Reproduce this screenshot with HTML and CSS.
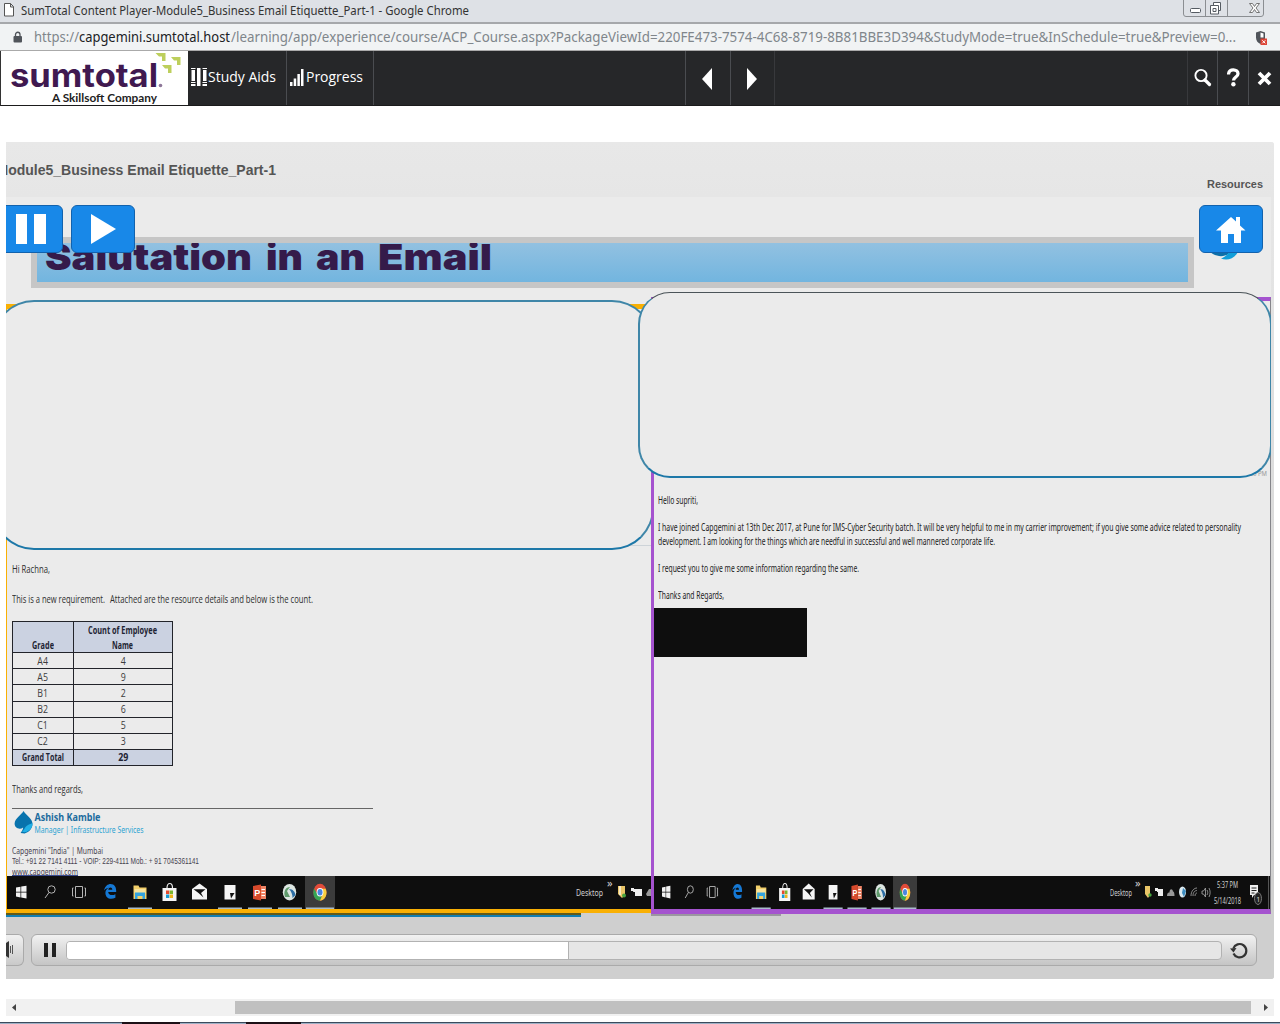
FILE: index.html
```html
<!DOCTYPE html>
<html lang="en">
<head>
<meta charset="utf-8">
<title>SumTotal Content Player</title>
<link rel="stylesheet" href="styles.css">
</head>
<body>
<svg class="defs" width="0" height="0">
  <symbol id="apps" viewBox="0 0 329 33" preserveAspectRatio="none">
    <rect x="299" y="0" width="30" height="33" fill="#3b3b3b"/>
    <path fill="#f2f2f2" d="M10 11.5l4.5-.8v5H10zM15.2 10.6l5.3-.9v6h-5.3zM10 16.4h4.5v5l-4.500-.8zM15.200 16.400h5.300v6l-5.300-.9z"/>
    <g fill="none" stroke="#b5b5b5" stroke-width="1"><circle cx="45.500" cy="13.500" r="3.700"/><path d="M43 16.500l-4 5.500M69.500 10.500h7v11h-7zM67.500 12h-1v8h1M78.500 12h1v8h-1"/></g>
    <path fill="#1578d4" d="M98 14.500c1-4.500 4-6.500 6.500-6.500 4 0 6 3 5.700 8h-8c0 3 4 4 7.200 2.200v3.600c-5 2.500-10 .5-10-5 0-2.500 1.500-4 3.500-5-1.500 0-3.500.8-4.900 2.700zM102.300 13.800h4c0-3-3.500-3-4 0z"/>
    <path fill="#f3d06b" d="M127.500 9.500h5l1 2h7V23h-13z"/><path fill="#f9e49c" d="M128.500 13h11v4h-11z"/><path fill="#35a4de" d="M129 16.500h10V23h-2.500v-3h-5v3H129z"/>
    <path fill="none" stroke="#eee" stroke-width="1.200" d="M161 12c0-6 5.500-6 5.500 0"/><path fill="#f5f5f5" d="M156.500 12h14v13h-14z"/><path fill="#e64a2e" d="M160 14.500h3.300v3.500H160z"/><path fill="#7cb82f" d="M163.700 14.500h3.300v3.500h-3.300z"/><path fill="#189ad6" d="M160 18.500h3.300v3.500H160z"/><path fill="#f0b51c" d="M163.700 18.500h3.300v3.500h-3.300z"/>
    <path fill="#f5f5f5" d="M186 13l7.500-5.500L201 13v10.500h-15z"/><path fill="#111" d="M187.500 13.300h12L195 17l2.500 4.500-5-4.500z"/>
    <path fill="#f5f5f5" d="M218.500 9h11v14.500h-11z"/><path fill="#111" d="M224 17h4.500l-3.500 5.500z"/>
    <path fill="#d74a2c" d="M247 10l8-1.500v16L247 23z"/><path fill="#ef8465" d="M255 10h5v13h-5z"/><text x="248.300" y="20" class="ppt">P</text><path stroke="#fff" d="M255.500 13.500h3.500M255.500 16.500h3.500M255.500 19.500h3.500"/>
    <ellipse cx="283.500" cy="16.200" rx="6.700" ry="8.300" fill="#dde6e2"/><path fill="#5f9a6c" d="M279 21c-2-6 1-10 5-10l-3 4 3 6z"/><path fill="#2c6ea5" d="M283 13c4 0 6 3 6.500 6l-3 3c0-4-1-6-3.500-9z"/>
    <ellipse cx="314" cy="16.200" rx="6.500" ry="8.500" fill="#e14b3a"/><path fill="#35a554" d="M308 12.500c-2 6 .5 12 6 12.200l2.500-6.500-5.500-1z"/><path fill="#f8cf3e" d="M314 24.700c6-.5 8-8 5.500-12h-5l2 6z"/><ellipse cx="314" cy="16.200" rx="3.400" ry="4.200" fill="#fff"/><ellipse cx="314" cy="16.200" rx="2.500" ry="3.300" fill="#4a86e0"/>
    <path fill="#a9bccb" d="M122 31.500h24V33h-24zM212 31.500h24V33h-24zM242 31.500h24V33h-24zM272 31.500h24V33h-24zM300 31.500h28V33h-28z"/>
  </symbol>
</svg>

<header class="titlebar">
  <svg class="doc" width="12" height="16"><path d="M1.500 1.500h6l3 3v9.500h-9zM7.500 1.500v3.500h3" fill="#fff" stroke="#555"/></svg>
  <svg width="449" height="22"><text x="0" y="15" textLength="448" lengthAdjust="spacingAndGlyphs" class="wintitle">SumTotal Content Player-Module5_Business Email Etiquette_Part-1 - Google Chrome</text></svg>
  <svg class="winbtns" width="82" height="18"><path d="M.5 0v14q0 2.500 2.500 2.500h75q2.500 0 2.500-2.500V0M22.500 0v16M44.500 0v16" fill="none" stroke="#8b8e92"/><g fill="#fff" stroke="#555b62"><rect x="7.500" y="8.500" width="10" height="4" rx="1"/><path d="M30.500 2.500h7v8h-7z"/><path d="M27.500 5.500h8v8.500h-8z"/><path d="M30 8.500h3v3h-3z"/></g><path d="M66.500 3.500h3l2 3 2-3h3l-3.500 4.500 3.500 4.500h-3l-2-3-2 3h-3l3.500-4.500z" fill="#fff" stroke="#666" stroke-width=".9"/></svg>
</header>

<div class="urlbar">
  <svg class="lock" width="10" height="13"><rect x=".5" y="5" width="8.500" height="6.500" rx="1" fill="#50545a"/><path d="M2.500 5V3.500a2.200 2.200 0 0 1 4.500 0V5" fill="none" stroke="#50545a" stroke-width="1.300"/></svg>
  <svg class="url" width="1203" height="26" fill="#80868b"><text x="0" y="18" textLength="45" lengthAdjust="spacingAndGlyphs">https://</text><text x="45" y="18" textLength="151" lengthAdjust="spacingAndGlyphs" fill="#202124">capgemini.sumtotal.host</text><text x="197" y="18" textLength="1005" lengthAdjust="spacingAndGlyphs">/learning/app/experience/course/ACP_Course.aspx?PackageViewId=220FE473-7574-4C68-8719-8B81BBE3D394&amp;StudyMode=true&amp;InSchedule=true&amp;Preview=0...</text></svg>
  <svg class="shield" width="14" height="16"><path d="M5.500 1L1 2.500v5c0 3.500 2 5.500 4.500 6.500l4.500-4V2.500z" fill="#50545a"/><path d="M5.500 2.500l3 1v4h-3z" fill="#fff"/><path d="M5.500 8.500h6.500V15H5.500z" fill="#dd4537"/><path d="M7.300 10.300l3 3m0-3l-3 3" stroke="#fff"/></svg>
</div>

<nav class="toolbar">
  <div class="logo">
    <svg width="187" height="54">
      <text x="9" y="36" textLength="148" lengthAdjust="spacingAndGlyphs" class="brand">sumtotal</text>
      <circle cx="159.500" cy="34.500" r="1.800" fill="#8d7798"/>
      <text x="51" y="51" textLength="105" lengthAdjust="spacingAndGlyphs" class="tagline">A Skillsoft Company</text>
      <path fill="#bdcf5c" d="M154.500 2h10v8h-3.500V5.500H158zM170 6h9.500v8H176V9.500h-3zM161 14h9.500v8H167v-4.500h-3z"/>
    </svg>
  </div>
  <div class="item aids">
    <svg width="17" height="20"><path fill="#fff" d="M.5 3H4v11H.5zM0 1h4.500v1H0zM0 15h4.500v1H0zM0 17h4.500v2H0zM6 1h3.500v18H6zM12 3h3.500v11H12zM11.500 1H16v1h-4.500zM11.500 15H16v1h-4.500zM11.500 17H16v2h-4.500z"/></svg>
    <svg width="69" height="20"><text x="0" y="15" textLength="68" lengthAdjust="spacingAndGlyphs">Study Aids</text></svg>
  </div>
  <div class="item progress">
    <svg width="16" height="20"><path fill="#fff" d="M0 15h2.500v4H0zM3.700 11.500h2.500V19H3.700zM7.400 7h2.500v12H7.400zM11 2h2.500v17H11z"/></svg>
    <svg width="58" height="20"><text x="0" y="15" textLength="57" lengthAdjust="spacingAndGlyphs">Progress</text></svg>
  </div>
  <div class="item prev"><svg width="10" height="22"><path fill="#fff" d="M10 0v22L0 11z"/></svg></div>
  <div class="item next"><svg width="10" height="22"><path fill="#fff" d="M0 0v22l10-11z"/></svg></div>
  <div class="item search"><svg width="18" height="20"><circle cx="7" cy="7.500" r="5.600" fill="none" stroke="#fff" stroke-width="1.900"/><path d="M11 12l4.500 4.500" stroke="#fff" stroke-width="3.200" stroke-linecap="round"/></svg></div>
  <div class="item help"><svg width="14" height="20"><path d="M1.500 6.500c.3-6.800 9.500-5.500 9.500-.8 0 3.300-4.500 3.300-4.500 6.800" fill="none" stroke="#fff" stroke-width="3.300"/><circle cx="6.400" cy="16.300" r="2.200" fill="#fff"/></svg></div>
  <div class="item close"><svg width="15" height="15"><path d="M2 2l11 11M13 2L2 13" stroke="#fff" stroke-width="3.800"/></svg></div>
</nav>

<main class="stage">
  <div class="stagehead">
    <svg width="275" height="55"><text x="-9.500" y="33" textLength="279.500" lengthAdjust="spacingAndGlyphs" class="course">Module5_Business Email Etiquette_Part-1</text></svg>
    <svg class="res" width="57" height="55"><text x="0" y="46" textLength="56" lengthAdjust="spacingAndGlyphs" class="resources">Resources</text></svg>
  </div>

  <section class="slide">
    <div class="banner"><svg width="460" height="39" class="headline"><text x="8" y="27" textLength="207" lengthAdjust="spacingAndGlyphs">Salutation</text><text x="229" y="27" textLength="37" lengthAdjust="spacingAndGlyphs">in</text><text x="279" y="27" textLength="49" lengthAdjust="spacingAndGlyphs">an</text><text x="341" y="27" textLength="114" lengthAdjust="spacingAndGlyphs">Email</text></svg></div>

    <div class="panes">
      <article class="mail left">
        <div class="body">
          <svg class="ln" width="39" height="16"><text x="0" y="12" textLength="38" lengthAdjust="spacingAndGlyphs">Hi Rachna,</text></svg>
          <svg class="ln" width="302" height="16"><text x="0" y="12" textLength="93" lengthAdjust="spacingAndGlyphs">This is a new requirement.</text><text x="98" y="12" textLength="203" lengthAdjust="spacingAndGlyphs">Attached are the resource details and below is the count.</text></svg>
          <table>
            <tr class="band head"><td><svg width="22" height="15"><text x="0" y="12" textLength="22" lengthAdjust="spacingAndGlyphs">Grade</text></svg></td><td><svg width="70" height="30"><text x="0" y="12" textLength="69" lengthAdjust="spacingAndGlyphs">Count of Employee</text><text x="24" y="27" textLength="21" lengthAdjust="spacingAndGlyphs">Name</text></svg></td></tr>
            <tr><td><span>A4</span></td><td><span>4</span></td></tr>
            <tr><td><span>A5</span></td><td><span>9</span></td></tr>
            <tr><td><span>B1</span></td><td><span>2</span></td></tr>
            <tr><td><span>B2</span></td><td><span>6</span></td></tr>
            <tr><td><span>C1</span></td><td><span>5</span></td></tr>
            <tr><td><span>C2</span></td><td><span>3</span></td></tr>
            <tr class="band"><td><svg width="43" height="14"><text x="0" y="11" textLength="42" lengthAdjust="spacingAndGlyphs">Grand Total</text></svg></td><td><span>29</span></td></tr>
          </table>
          <svg class="ln thanks" width="72" height="16"><text x="0" y="12" textLength="71" lengthAdjust="spacingAndGlyphs">Thanks and regards,</text></svg>
          <div class="rule"></div>
          <svg class="sig" width="200" height="67">
            <path fill="#0873ad" d="M11.500 2C9.500 6 3 9 2.600 14.500c0 5 5.500 6.500 8.500 4-.2 2-1 3.500-2.500 5.500l4 .5C17.500 23 20.500 19 20.500 15c0-5.500-6-8-9-13z"/><path fill="#22b0e6" d="M20.500 14c-2 1-4 1.500-6 3-2 1.500-2 4-4.500 5.500 1.500 1 4 1 6-.5 3-1.500 4.500-4 4.500-8z"/>
            <text x="22.500" y="12" textLength="66" lengthAdjust="spacingAndGlyphs" class="name">Ashish Kamble</text>
            <text x="22.500" y="23.500" textLength="109" lengthAdjust="spacingAndGlyphs" class="role">Manager | Infrastructure Services</text>
            <g class="addr"><text x="0" y="44.500" textLength="91" lengthAdjust="spacingAndGlyphs">Capgemini "India" | Mumbai</text><text x="0" y="55" textLength="187" lengthAdjust="spacingAndGlyphs" class="tel">Tel.: +91 22 7141 4111 - VOIP: 229-4111 Mob.: + 91 7045361141</text><text x="0" y="66" textLength="66" lengthAdjust="spacingAndGlyphs">www.capgemini.com</text></g>
            <path d="M0 66.500h66" stroke="#3a4a90"/>
          </svg>
        </div>
        <div class="taskbar">
          <svg width="329" height="33"><use href="#apps" x="-1" width="329" height="33"/></svg>
          <svg width="78" height="33"><text x="3" y="20" textLength="27" lengthAdjust="spacingAndGlyphs">Desktop</text><text x="34" y="11" class="chev">»</text><path fill="#e9c567" d="M45 10h7v9l-3 3-4-4z"/><path fill="#fff" opacity=".6" d="M46 10h2v9h-2z"/><circle cx="51" cy="19.500" r="2" fill="#46a33e"/><path fill="#eee" d="M61 13h8v7h-7v-4h-2zM58 12h3v3h-3z"/><path fill="#999" d="M73 18l3-5h2v7h-4z"/></svg>
        </div>
      </article>

      <article class="mail right">
        <div class="body">
          <svg class="para" width="590" height="120">
            <text x="0" y="10" textLength="40" lengthAdjust="spacingAndGlyphs">Hello supriti,</text>
            <text x="0" y="37" textLength="583" lengthAdjust="spacingAndGlyphs">I have joined Capgemini at 13th Dec 2017, at Pune for IMS-Cyber Security batch. It will be very helpful to me in my carrier improvement; if you give some advice related to personality</text>
            <text x="0" y="50.500" textLength="337" lengthAdjust="spacingAndGlyphs">development. I am looking for the things which are needful in successful and well mannered corporate life.</text>
            <text x="0" y="77.500" textLength="201" lengthAdjust="spacingAndGlyphs">I request you to give me some information regarding the same.</text>
            <text x="0" y="104.500" textLength="66" lengthAdjust="spacingAndGlyphs">Thanks and Regards,</text>
          </svg>
          <div class="redacted"></div>
        </div>
        <div class="taskbar">
          <svg width="263" height="33"><use href="#apps" width="263" height="33"/></svg>
          <svg width="162" height="33">
            <text x="2" y="20" textLength="22" lengthAdjust="spacingAndGlyphs">Desktop</text><text x="27" y="11" class="chev">»</text>
            <path fill="#e9c567" d="M37 10h5v9l-2 3-3-4z"/><circle cx="42" cy="19" r="1.700" fill="#46a33e"/>
            <path fill="#eee" d="M49 13h6v7h-5v-4h-1zM47 12h3v3h-3z"/><path fill="#999" d="M59 20c0-3 1.500-4 2.500-3.500 0-4 3-4 3.500-1 1 0 1.500 2 1.500 4.500z"/>
            <ellipse cx="74.500" cy="16" rx="3.500" ry="5.500" fill="#dceaf0"/><path fill="#3c8cc0" d="M75 12l3 3-2 6-2-4z"/>
            <path fill="none" stroke="#aaa" stroke-width=".8" d="M83 20c0-5 3-8 6-8M85 20c0-4 2-5.500 4-5.500M87 20c0-2 1-3 2-3M94 15h1.500l2-3v9l-2-3H94zM99 14c1 2 1 3 0 5M101 12c1.500 3 1.500 6 0 9"/>
            <text x="109" y="12" textLength="21" lengthAdjust="spacingAndGlyphs">5:37 PM</text><text x="106" y="28" textLength="27" lengthAdjust="spacingAndGlyphs">5/14/2018</text>
            <path fill="#eee" d="M142 9h8v10h-4l-2 3v-3h-2z"/><path stroke="#222" d="M143.500 12h5M143.500 14.500h5M143.500 17h3"/><ellipse cx="150" cy="22.500" rx="3.500" ry="6" fill="#222" stroke="#777"/><text x="148.200" y="25.500" class="one">1</text><path d="M160.500 0v33" stroke="#555"/>
          </svg>
        </div>
      </article>
    </div>

    <div class="footline"></div>
    <div class="footshade"></div>
    <div class="hairline"></div>
    <svg class="stamp" width="24" height="10"><text x="1" y="8" textLength="19" lengthAdjust="spacingAndGlyphs">:33 PM</text></svg>
    <div class="callout one-left"></div>
    <div class="callout two-right"></div>

    <svg class="spade" width="32" height="10"><path fill="#0c6fa9" d="M0 0h20c-3 5-13 6-20 0z"/><path fill="#119ed9" d="M28 0C24 7 17 9 11 6.500c3-1 6-3 8-6.500z"/></svg>
    <button class="ctl c-pause"><svg width="30" height="30"><path fill="#fff" d="M0 0h11v30H0zM18 0h12v30H18z"/></svg></button>
    <button class="ctl c-play"><svg width="26" height="30"><path fill="#fff" d="M0 0v30l25-15z"/></svg></button>
    <button class="ctl c-home"><svg width="30" height="27"><path fill="#fff" d="M0 14.500L15 1l5 4.500V1h4v8.500l5.500 5H25V27h-7v-9h-6v9H5V14.500z"/></svg></button>
  </section>

  <footer class="player">
    <div class="volume"><svg width="17" height="30"><path fill="#333" d="M0 8l3-2v17l-3-2z"/><path stroke="#555" stroke-width="1" d="M4.500 11v7M6.500 10v9"/></svg></div>
    <div class="seekbox">
      <svg width="12" height="14"><path fill="#222" d="M0 0h4v14H0zM8 0h4v14H8z"/></svg>
      <div class="track"><div class="played"></div></div>
      <svg class="replay" width="20" height="20"><path d="M4.500 13.500A6.700 6.700 0 1 0 4.300 8.500" fill="none" stroke="#333" stroke-width="2.200"/><path fill="#333" d="M1 8.500l6.500-.5-3 4.500z"/></svg>
    </div>
  </footer>
</main>

<div class="scroll">
  <svg width="17" height="17"><path fill="#444" d="M10 5v7L6 8.500z"/></svg>
  <div class="thumb"></div>
  <svg class="fwd" width="17" height="17"><path fill="#444" d="M7 5v7l4-3.500z"/></svg>
</div>
<div class="desktop"><i></i><b></b><i></i><b></b><i></i></div>
</body>
</html>
```
FILE: styles.css
```css
* { box-sizing: border-box; }
body { margin: 0; width: 1280px; height: 1024px; overflow: hidden; background: #fff; display: flex; flex-direction: column; font-family: "Noto Sans", "Open Sans", sans-serif; }
body > * { flex: none; }
svg { display: block; flex: none; }
svg.defs { position: absolute; }

.titlebar { height: 24px; background: #dee1e6; border-bottom: 2px solid #a6a8ab; display: flex; padding-left: 3px; }
.doc { margin: 2px 6px 0 0; }
.wintitle { font-size: 12px; fill: #333; }
.winbtns { margin: 0 15px 0 auto; }

.urlbar { height: 27px; background: #f1f3f4; border-bottom: 1px solid #aaa; display: flex; padding-left: 13px; }
.lock { margin: 7px 11px 0 0; }
.url { font-size: 13.5px; }
.shield { margin: 6px 11px 0 auto; }

.toolbar { height: 55px; background: #262729; display: flex; border-left: 1px solid #333; border-bottom: 1px solid #1b1b1c; }
.logo { width: 187px; background: #fff; }
.brand { font: 700 32px Inter, sans-serif; fill: #401950; }
.tagline { font: 700 10.5px Lato, sans-serif; fill: #222; }
.item { display: flex; border-right: 1px solid #4a4c50; font-family: "Open Sans", sans-serif; font-size: 14px; fill: #fff; }
.aids { width: 99px; padding: 16px 0 0 3px; }
.progress { width: 87px; padding: 16px 0 0 3px; }
.prev { margin-left: 311px; width: 46px; border-left: 1px solid #4a4c50; padding: 17px 0 0 16px; }
.next { width: 44px; padding: 17px 0 0 16px; border-right-color: #38393c; }
.search { margin-left: 412px; width: 31px; border-left: 1px solid #38393c; padding: 17px 0 0 6px; }
.help { width: 31px; padding: 17px 0 0 9px; }
.close { border: 0; padding: 20px 0 0 8px; }

.stage { margin: 36px 6px 0; height: 837px; width: 1268px; overflow: hidden; background: linear-gradient(#e8e8e8, #e6e6e6 8%, #cfcfcf 88%); border-radius: 0 3px 3px 0; display: flex; flex-direction: column; }
.stagehead { height: 55px; background: linear-gradient(#e8e8e8, #e6e6e6); display: flex; justify-content: space-between; padding-right: 10px; }
.course { font: 700 14px "Liberation Sans", sans-serif; fill: #555; }
.resources { font: 700 11px "Liberation Sans", sans-serif; fill: #555; }

.slide { position: relative; width: 1265px; height: 720px; background: linear-gradient(#ebebeb 713px, #cfcfcf 713px); padding: 40px 0 0; overflow: hidden; }
.banner { margin-left: 25px; width: 1163px; height: 51px; border: 6px solid #c6c6c6; background: linear-gradient(#92c1e1, #72b5df); }
.headline { font: 900 36px Inter, sans-serif; fill: #351b4a; }

.panes { display: grid; grid-template-columns: 645px 620px; align-items: start; height: 626px; }
.mail { display: flex; flex-direction: column; background: #ebebeb; }
.body { flex: 1; overflow: hidden; }
.left { margin-top: 16px; height: 609px; border: solid #f9b004; border-width: 5px 0 4px 1px; }
.right { margin-top: 9px; height: 617px; border: solid #a553cf; border-width: 4px 0 5px 3px; border-right: 1px solid #85858a; }
.left .body { padding: 252px 0 0 5px; font-family: "Open Sans", sans-serif; }
.ln { font-size: 11px; fill: #2e2e2e; margin-bottom: 14px; }
.left table { width: 161px; height: 145px; border-collapse: collapse; table-layout: fixed; font-size: 11px; color: #3c3c3c; }
.left td { border: 1px solid #22242a; padding: 0; height: 16px; text-align: center; line-height: 14px; }
.left td:first-child { width: 61px; }
.left td svg { margin: 0 auto; }
.left td span { display: inline-block; transform: scaleX(.8); vertical-align: top; }
.band { background: #cbd2e1; font-weight: 700; color: #1e2433; fill: #1e2433; }
.left .head td { height: 31px; vertical-align: bottom; }
.thanks { margin: 15px 0 11px; }
.rule { width: 361px; height: 1px; background: #666; }
.sig { font-family: "Noto Sans", sans-serif; }
.name { font-size: 11px; font-weight: 700; fill: #1d6c9e; }
.role { font-size: 9px; fill: #2ea3d2; }
.addr { font-size: 9px; fill: #484350; }
.tel { font-family: "Liberation Sans", sans-serif; }
.para { margin: 193px 0 0 4px; font-size: 10.8px; fill: #222; }
.redacted { width: 153px; height: 49px; margin-top: -6px; background: #0e0e0e; }
.taskbar { flex: none; height: 33px; background: #0e0e0e; display: flex; justify-content: space-between; font-size: 9.5px; fill: #d0d0d0; }
.chev { font-size: 11px; }
.ppt { font: 700 9px "Liberation Sans", sans-serif; fill: #fff; }
.one { font-size: 7px; }

/* objects floating on the slide canvas */
.footline, .footshade, .hairline, .stamp, .callout, .spade, .ctl { position: absolute; }
.footline { left: 0; top: 716px; width: 575px; height: 4px; background: linear-gradient(#625a19 50%, #117fb5 50%); }
.footshade { left: 645px; top: 717px; width: 130px; height: 2px; background: #9b97a0; }
.hairline { left: 600px; top: 348px; width: 45px; height: 1px; background: #cdd3d8; }
.stamp { left: 1241px; top: 271px; font-size: 7px; fill: #999; }
.callout { background: #ebebeb; border: 2px solid #3f86a8; border-bottom-color: #1d78a8; }
.one-left { left: -14px; top: 103px; width: 662px; height: 250px; border-radius: 42px; clip-path: inset(0 3px 0 0); }
.two-right { left: 632px; top: 95px; width: 634px; height: 186px; border-radius: 32px; border-top: 1px solid #4b5459; }
.spade { left: 1204px; top: 55px; }
.ctl { top: 8px; width: 64px; height: 48px; border: 1px solid #1262ad; border-radius: 6px; background: #1888e8; padding: 0; }
.c-pause { left: -7px; } .c-pause svg { margin-left: 16px; }
.c-play { left: 65px; } .c-play svg { margin-left: 19px; }
.c-home { left: 1193px; } .c-home svg { margin-left: 16px; }

.player { height: 62px; background: #cfcfcf; padding-top: 17px; display: flex; }
.volume { width: 18px; height: 32px; border: 1px solid #aaa; border-left: 0; border-radius: 0 6px 6px 0; background: linear-gradient(#f1f1f1, #c9c9c9); }
.seekbox { margin-left: 7px; width: 1226px; height: 32px; border: 1px solid #aaa; border-radius: 6px; background: linear-gradient(#f2f2f2, #c5c5c5); display: flex; align-items: center; padding-left: 12px; }
.track { margin-left: 10px; width: 1156px; height: 19px; border: 1px solid #b2b2b2; border-radius: 4px; background: #e6e6e6; overflow: hidden; }
.played { width: 502px; height: 100%; background: #fff; border-right: 1px solid #b2b2b2; }
.replay { margin-left: 7px; }

.scroll { margin: 20px 6px 0; height: 17px; background: #f1f1f1; display: flex; align-items: center; }
.thumb { width: 1016px; height: 13px; margin: 0 6px 0 212px; background: #c0c0c0; }
.desktop { margin-top: 6px; height: 2px; display: grid; grid-template-columns: 122px 58px 66px 55px 1fr; }
.desktop i { background: #9db0c5; border-top: 1px solid #3b4a5c; }
.desktop b { background: #1c1016; }
```
